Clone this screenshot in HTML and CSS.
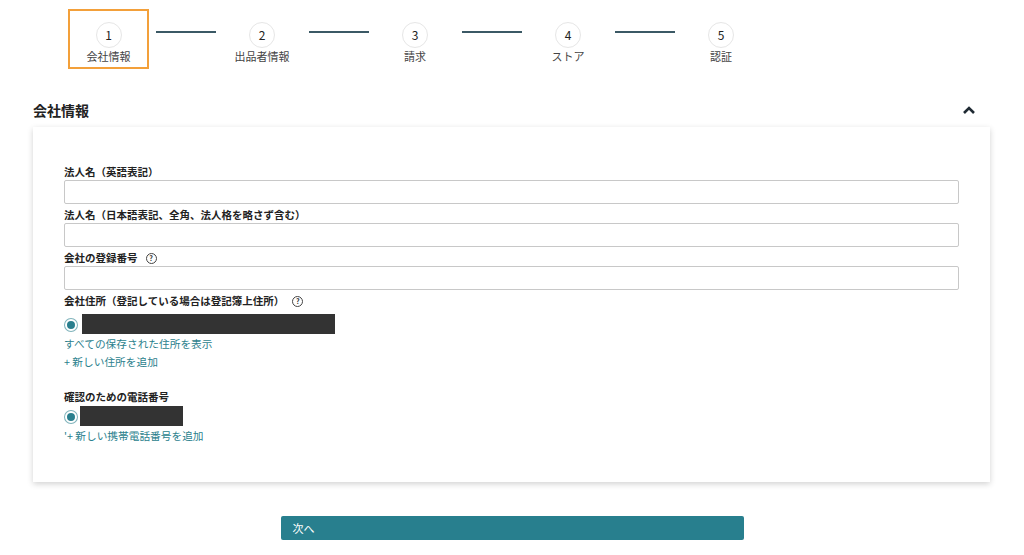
FILE: index.html
```html
<!DOCTYPE html>
<html>
<head>
    <title>会社情報</title>
    <link rel="stylesheet" href="styles.css">
</head>
<body>
    <div class="steps">
        <div class="step active">
            <div class="step-num">1</div>
            <div class="step-label">会社情報</div>
        </div>
        <div class="step-line"></div>
        <div class="step">
            <div class="step-num">2</div>
            <div class="step-label">出品者情報</div>
        </div>
        <div class="step-line"></div>
        <div class="step">
            <div class="step-num">3</div>
            <div class="step-label">請求</div>
        </div>
        <div class="step-line"></div>
        <div class="step">
            <div class="step-num">4</div>
            <div class="step-label">ストア</div>
        </div>
        <div class="step-line"></div>
        <div class="step">
            <div class="step-num">5</div>
            <div class="step-label">認証</div>
        </div>
    </div>

    <div class="section-head">
        <div class="section-title">会社情報</div>
        <svg class="chevron" width="14" height="10" viewBox="0 0 14 10">
            <path d="M2 8 L7 3 L12 8" fill="none" stroke="#1f2a33" stroke-width="2.6"/>
        </svg>
    </div>

    <div class="card">
        <div class="field">
            <div class="label">法人名（英語表記）</div>
            <div class="input"></div>
        </div>
        <div class="field">
            <div class="label">法人名（日本語表記、全角、法人格を略さず含む）</div>
            <div class="input"></div>
        </div>
        <div class="field">
            <div class="label">会社の登録番号 <span class="help">?</span></div>
            <div class="input"></div>
        </div>
        <div class="label">会社住所（登記している場合は登記簿上住所） <span class="help">?</span></div>
        <div class="radio-row">
            <span class="radio"></span>
            <span class="masked wide"></span>
        </div>
        <div class="link">すべての保存された住所を表示</div>
        <div class="link">+ 新しい住所を追加</div>

        <div class="label phone-label">確認のための電話番号</div>
        <div class="radio-row tight">
            <span class="radio"></span>
            <span class="masked narrow"></span>
        </div>
        <div class="link">'+ 新しい携帯電話番号を追加</div>
    </div>

    <div class="actions">
        <div class="btn-next">次へ</div>
    </div>
</body>
</html>
```

FILE: styles.css
```css
body {
    margin: 0;
    font-family: "Noto Sans CJK JP", "Noto Sans", sans-serif;
    color: #333;
    background: #fff;
}
.steps {
    display: flex;
    align-items: flex-start;
    padding: 9px 0 0 69px;
}
.step {
    width: 80px;
    height: 60px;
    box-sizing: border-box;
    border: 2px solid transparent;
    display: flex;
    flex-direction: column;
    align-items: center;
}
.step.active {
    border-color: #f3a03a;
    margin-left: -1px;
    width: 81px;
}
.step-num {
    width: 24px;
    height: 24px;
    margin-top: 11px;
    border: 1px solid #e6e6e6;
    border-radius: 50%;
    font-size: 12px;
    line-height: 24px;
    text-align: center;
    color: #222;
}
.step-label {
    font-size: 11px;
    line-height: 14px;
    margin-top: 1px;
    color: #444;
}
.step-line {
    width: 60px;
    height: 2px;
    margin: 22px 6px 0 7px;
    background: #3b5965;
}
.section-head {
    display: flex;
    align-items: center;
    justify-content: space-between;
    margin: 31px 48px 0 33px;
    height: 20px;
}
.section-title {
    font-size: 14px;
    font-weight: bold;
    color: #222;
}
.chevron {
    display: block;
}
.card {
    margin: 7px 34px 0 33px;
    padding: 37px 31px 38px 31px;
    background: #fff;
    box-shadow: 0 2px 6px rgba(0, 0, 0, 0.18);
}
.field {
    margin-bottom: 3px;
}
.label {
    font-size: 10.5px;
    font-weight: bold;
    line-height: 16px;
    color: #222;
    display: flex;
    align-items: center;
}
.help {
    display: inline-block;
    width: 9px;
    height: 9px;
    margin-left: 8px;
    border: 1px solid #444;
    border-radius: 50%;
    font-size: 7px;
    line-height: 9px;
    text-align: center;
    font-weight: bold;
}
.input {
    height: 24px;
    box-sizing: border-box;
    border: 1px solid #c8c8c8;
    border-radius: 2px;
}
.radio-row {
    display: flex;
    align-items: center;
    height: 20px;
    margin-top: 5px;
}
.radio-row.tight {
    margin-top: 1px;
}
.radio {
    width: 8px;
    height: 8px;
    border: 2px solid #fff;
    border-radius: 50%;
    background: #2a7f8e;
    box-shadow: 0 0 0 1px #7fb3bb;
    margin: 2px 5px 0 1px;
}
.masked {
    height: 20px;
    background: #333;
}
.masked.wide {
    width: 253px;
}
.masked.narrow {
    width: 103px;
    margin-left: -2px;
}
.link {
    font-size: 10.7px;
    line-height: 16px;
    color: #2b7f8d;
    margin-top: 2px;
}
.phone-label {
    margin-top: 19px;
}
.actions {
    display: flex;
    justify-content: center;
    margin-top: 34px;
}
.btn-next {
    width: 463px;
    height: 24px;
    box-sizing: border-box;
    padding-left: 12px;
    background: #287f8e;
    border-radius: 2px;
    color: #fff;
    font-size: 11px;
    line-height: 24px;
}
```
